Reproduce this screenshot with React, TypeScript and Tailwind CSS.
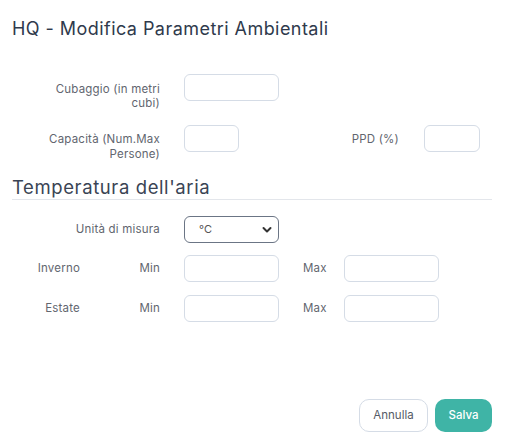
import React from "react";

const inputCls =
  "h-[27px] rounded-[6px] border border-[#d5dce6] bg-white outline-none";

export default function App() {
  return (
    <div
      className="w-[508px] h-[448px] bg-white relative text-[#62666f]"
      style={{ fontFamily: "Inter, 'Noto Sans', sans-serif" }}
    >
      <div className="pl-3 pr-4 pt-[17px]">
        <h1 className="text-[18px] leading-[24px] text-[#2f3a4c] font-normal tracking-[0.45px]">
          HQ - Modifica Parametri Ambientali
        </h1>

        {/* Row 1 */}
        <div className="flex items-start mt-[33px]">
          <div className="w-[148px] text-right text-[11.5px] leading-[14px] pt-[8px] whitespace-nowrap tracking-[0.2px]">
            Cubaggio (in metri
            <br />
            cubi)
          </div>
          <input className={`${inputCls} w-[95px] ml-[24px]`} />
        </div>

        {/* Row 2 */}
        <div className="flex items-start mt-[15px]">
          <div className="w-[148px] text-right text-[11.5px] leading-[15px] pt-[7px] whitespace-nowrap tracking-[0.2px]">
            Capacità (Num.Max
            <br />
            Persone)
          </div>
          <input className={`${inputCls} w-[55px] ml-[24px]`} />
          <div className="w-[160px] text-right text-[11.5px] leading-[14px] pt-[7px] whitespace-nowrap tracking-[0.2px]">
            PPD (%)
          </div>
          <input className={`${inputCls} w-[56px] ml-[25px]`} />
        </div>

        {/* Section */}
        <h2 className="mt-[14px] text-[18.5px] leading-[22px] text-[#3a4454] font-normal tracking-[0.6px]">
          Temperatura dell'aria
        </h2>
        <div className="w-[480px] h-px bg-[#e3e6eb] mt-[1px]" />

        {/* Unità */}
        <div className="flex items-center mt-[16px]">
          <div className="w-[148px] text-right text-[11.5px] whitespace-nowrap tracking-[0.2px]">
            Unità di misura
          </div>
          <div className="ml-[24px] w-[95px] h-[27px] rounded-[6px] border border-[#6b7585] flex items-center justify-between pl-[14px] pr-[6px]">
            <span className="text-[11px] text-[#555]">°C</span>
            <svg width="10" height="8" viewBox="0 0 10 8">
              <path
                d="M1.5 2 L5 5.5 L8.5 2"
                fill="none"
                stroke="#333"
                strokeWidth="2"
                strokeLinecap="round"
                strokeLinejoin="round"
              />
            </svg>
          </div>
        </div>

        {/* Inverno */}
        <div className="flex items-center mt-[12px]">
          <div className="w-[68px] text-right text-[11.5px] tracking-[0.2px]">Inverno</div>
          <div className="w-[80px] text-right text-[11.5px] tracking-[0.2px]">Min</div>
          <input className={`${inputCls} w-[95px] ml-[24px]`} />
          <div className="ml-[24px] w-[41px] text-[11.5px] tracking-[0.2px]">Max</div>
          <input className={`${inputCls} w-[95px]`} />
        </div>

        {/* Estate */}
        <div className="flex items-center mt-[13px]">
          <div className="w-[68px] text-right text-[11.5px] tracking-[0.2px]">Estate</div>
          <div className="w-[80px] text-right text-[11.5px] tracking-[0.2px]">Min</div>
          <input className={`${inputCls} w-[95px] ml-[24px]`} />
          <div className="ml-[24px] w-[41px] text-[11.5px] tracking-[0.2px]">Max</div>
          <input className={`${inputCls} w-[95px]`} />
        </div>
      </div>

      <div className="absolute right-[16px] top-[399px] flex gap-[7px]">
        <button className="w-[69px] h-[33px] rounded-[10px] border border-[#d5dce6] bg-white text-[11.5px] text-[#555a66]">
          Annulla
        </button>
        <button className="w-[57px] h-[33px] rounded-[10px] bg-[#3fb4a6] text-[11.5px] text-white font-medium">
          Salva
        </button>
      </div>
    </div>
  );
}
